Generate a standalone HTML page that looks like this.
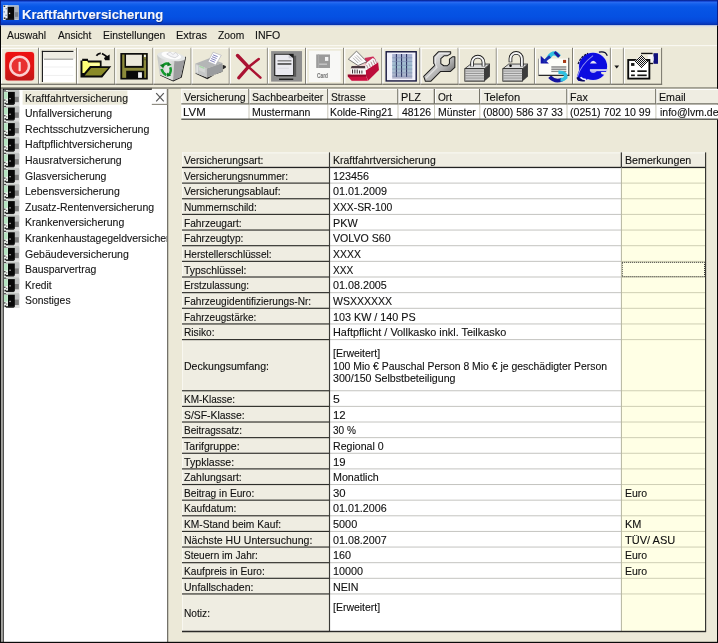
<!DOCTYPE html><html lang="de"><head><meta charset="utf-8"><title>Kraftfahrtversicherung</title><style>
*{box-sizing:border-box;margin:0;padding:0}
html,body{width:718px;height:643px;overflow:hidden;background:#ece9d8}
body{position:relative;font-family:"Liberation Sans",sans-serif;font-size:11.5px;color:#101010;line-height:1}
#tx{position:absolute;left:0;top:0;width:718px;height:643px;will-change:transform}
#g{position:absolute;left:0;top:0;width:718px;height:643px;display:block}
.a{position:absolute}
.t{position:absolute;white-space:nowrap;transform-origin:0 0;line-height:1;display:block;-webkit-text-stroke:0.12px currentColor}
#lp{position:absolute;left:3px;top:90px;width:163.9px;height:552px;overflow:hidden}
</style></head><body>
<svg id="g" width="718" height="643" viewBox="0 0 718 643">
<defs><linearGradient id="tg" gradientUnits="userSpaceOnUse" x1="0" y1="0" x2="0" y2="25.4"><stop offset="0.000" stop-color="#08207c"/><stop offset="0.039" stop-color="#0a34c4"/><stop offset="0.087" stop-color="#2a6cf0"/><stop offset="0.157" stop-color="#1460ec"/><stop offset="0.276" stop-color="#0756e6"/><stop offset="0.669" stop-color="#0550e2"/><stop offset="0.827" stop-color="#074ada"/><stop offset="0.913" stop-color="#083cc6"/><stop offset="1.000" stop-color="#062e9e"/></linearGradient></defs>
<rect x="0.00" y="0.00" width="718.00" height="25.40" fill="url(#tg)"/>
<rect x="0.00" y="25.30" width="718.00" height="1.40" fill="#cdd6ee"/>
<rect x="0.00" y="26.50" width="718.00" height="1.00" fill="#e6e6e0"/>
<rect x="0.00" y="0.00" width="1.00" height="25.40" fill="#0a1f8a"/>
<rect x="717.00" y="0.00" width="1.00" height="25.40" fill="#0a1f8a"/>
<rect x="0.00" y="45.10" width="718.00" height="1.00" fill="#fbfaf4"/>
<g transform="translate(3.2,5.2)"><rect x="0" y="0" width="15.6" height="14.8" fill="#c4ccd8"/><rect x="0" y="0" width="4.6" height="14.8" fill="#e4ecf8"/><rect x="0.4" y="0.4" width="1.6" height="1.4" fill="#333"/><rect x="2.4" y="2.8" width="1.4" height="1.4" fill="#8898b8"/><rect x="0.4" y="6" width="1.4" height="1.4" fill="#8898b8"/><rect x="2.2" y="9.4" width="1.4" height="1.4" fill="#8898b8"/><rect x="0.6" y="12.2" width="1.6" height="1.6" fill="#333"/><rect x="4.4" y="1.6" width="6.8" height="12.4" fill="#080808"/><rect x="2.4" y="13.2" width="8.6" height="1.5" fill="#101018"/><rect x="5.7" y="7.6" width="1.3" height="1.3" fill="#d8d8d8"/><rect x="11.2" y="1.0" width="4.4" height="13" fill="#a8aeb8"/><rect x="11.6" y="7" width="3.4" height="4.6" fill="#7c828c"/></g>
<rect x="0.75" y="47.80" width="1.20" height="37.10" fill="#ffffff"/>
<rect x="0.75" y="47.80" width="37.35" height="1.00" fill="#ffffff"/>
<rect x="38.00" y="47.80" width="1.00" height="37.20" fill="#77756a"/>
<rect x="0.75" y="83.65" width="38.25" height="1.30" fill="#77756a"/>
<g transform="translate(0,44) scale(0.08357)"><rect x="52" y="87" width="366" height="360" rx="45" fill="#f6c8c0" opacity="0.75"/><defs><linearGradient id="pw" x1="0" y1="0" x2="0" y2="1"><stop offset="0" stop-color="#ee1010"/><stop offset="0.5" stop-color="#e01414"/><stop offset="1" stop-color="#c01818"/></linearGradient></defs><rect x="62" y="97" width="346" height="340" rx="36" fill="url(#pw)"/><circle cx="235" cy="264" r="112" fill="#e83030" stroke="#fbd0d0" stroke-width="30"/><rect x="222" y="213" width="26" height="112" rx="8" fill="#fbd8d8"/></g>
<rect x="38.90" y="47.80" width="1.20" height="37.10" fill="#ffffff"/>
<rect x="38.90" y="47.80" width="37.35" height="1.00" fill="#ffffff"/>
<rect x="76.15" y="47.80" width="1.00" height="37.20" fill="#77756a"/>
<rect x="38.90" y="83.65" width="38.25" height="1.30" fill="#77756a"/>
<g transform="translate(36,44) scale(0.08357)"><rect x="70" y="82" width="402" height="376" fill="#ffffff" /><rect x="82" y="95" width="390" height="81" fill="#efede4" /><rect x="95" y="174" width="350" height="16" fill="#a8a8a4" /><rect x="95" y="270" width="350" height="10" fill="#ececec" /><rect x="95" y="370" width="350" height="10" fill="#ececec" /><rect x="70" y="82" width="378" height="13" fill="#151515" /><rect x="70" y="82" width="13" height="373" fill="#151515" /></g>
<rect x="77.05" y="47.80" width="1.20" height="37.10" fill="#ffffff"/>
<rect x="77.05" y="47.80" width="37.35" height="1.00" fill="#ffffff"/>
<rect x="114.30" y="47.80" width="1.00" height="37.20" fill="#77756a"/>
<rect x="77.05" y="83.65" width="38.25" height="1.30" fill="#77756a"/>
<g transform="translate(74,44) scale(0.08357)"><polygon points="78,198 98,198 98,176 166,176 170,198 330,198 330,266 446,266 338,402 78,402" fill="#0a0a0a" /><polygon points="101,203 158,203 170,222 308,222 308,262 192,262 122,348 101,348" fill="#ffff78" /><polygon points="180,232 306,232 306,258 200,258" fill="#ffffb0" /><polygon points="205,287 410,287 325,378 128,378" fill="#8a8a28" /><path d="M268 140 Q300 98 345 120 Q380 138 398 160" stroke="#0a0a0a" stroke-width="22" fill="none" stroke-dasharray="62 14 200"/><polygon points="358,168 426,126 426,194 372,194" fill="#0a0a0a" /></g>
<rect x="115.20" y="47.80" width="1.20" height="37.10" fill="#ffffff"/>
<rect x="115.20" y="47.80" width="37.35" height="1.00" fill="#ffffff"/>
<rect x="152.45" y="47.80" width="1.00" height="37.20" fill="#77756a"/>
<rect x="115.20" y="83.65" width="38.25" height="1.30" fill="#77756a"/>
<g transform="translate(112,44) scale(0.08357)"><rect x="100" y="108" width="328" height="317" fill="#0a0a0a" /><rect x="122" y="126" width="286" height="279" fill="#8c8a3a" /><rect x="150" y="118" width="228" height="167" fill="#0a0a0a" /><rect x="168" y="128" width="190" height="134" fill="#ece9dc" /><rect x="383" y="130" width="22" height="25" fill="#f4f4f4" /><rect x="385" y="175" width="20" height="20" fill="#5a5a30" /><rect x="170" y="320" width="215" height="92" fill="#0a0a0a" /><rect x="312" y="338" width="46" height="67" fill="#f2f2f2" /></g>
<rect x="153.35" y="47.80" width="1.20" height="37.10" fill="#ffffff"/>
<rect x="153.35" y="47.80" width="37.35" height="1.00" fill="#ffffff"/>
<rect x="190.60" y="47.80" width="1.00" height="37.20" fill="#77756a"/>
<rect x="153.35" y="83.65" width="38.25" height="1.30" fill="#77756a"/>
<g transform="translate(150,44) scale(0.08357)"><defs><linearGradient id="rb1" x1="0" y1="0" x2="1" y2="0"><stop offset="0" stop-color="#c4c6c4"/><stop offset="0.6" stop-color="#e6e8e6"/><stop offset="1" stop-color="#d0d2d0"/></linearGradient></defs><polygon points="120,378 278,448 380,402 432,160 420,150 368,392 278,432 122,366" fill="#1a1a1a" /><polygon points="85,128 292,195 276,438 116,368" fill="url(#rb1)" /><polygon points="292,195 424,156 368,398 276,438" fill="#9c9c9e" /><ellipse cx="255" cy="150" rx="168" ry="52" fill="#e4e6e6" transform="rotate(8 255 150)"/><ellipse cx="255" cy="138" rx="120" ry="42" fill="#fdfdfd" transform="rotate(10 255 138)"/><path d="M200 120 L240 95 L275 125 L310 100 L340 140 L300 165 L250 150 Z" fill="#f4f4f6" stroke="#c8c8cc" stroke-width="8"/><g fill="none" stroke="#139a2c" stroke-width="30"><path d="M150 268 Q175 222 228 238"/><path d="M242 278 Q262 330 226 366"/><path d="M196 372 Q150 350 138 300"/></g><polygon points="118,252 170,236 160,292" fill="#0c7a20"/><polygon points="214,214 258,252 206,266" fill="#0c7a20"/><polygon points="206,340 252,380 200,392" fill="#0c7a20"/></g>
<rect x="191.50" y="47.80" width="1.20" height="37.10" fill="#ffffff"/>
<rect x="191.50" y="47.80" width="37.35" height="1.00" fill="#ffffff"/>
<rect x="228.75" y="47.80" width="1.00" height="37.20" fill="#77756a"/>
<rect x="191.50" y="83.65" width="38.25" height="1.30" fill="#77756a"/>
<g transform="translate(188,44) scale(0.08357)"><polygon points="90,344 92,356 232,422 454,282 452,264 414,248 412,332 226,402" fill="#262626" /><polygon points="85,235 225,292 225,402 90,346" fill="#c6c8c8" /><polygon points="85,235 255,172 412,226 225,292" fill="#b4b6b6" /><polygon points="225,292 412,226 412,332 225,402" fill="#9a9c9e" /><polygon points="100,250 118,257 118,345 100,338" fill="#e4e6e4" /><polygon points="128,255 202,285 202,345 128,315" fill="#d4d6d4" /><polygon points="135,258 195,282 195,298 135,274" fill="#a8d8a8" /><polygon points="240,212 300,98 398,136 332,250" fill="#ffffff" stroke="#9a9aa8" stroke-width="6"/><g stroke="#6a6ab0" stroke-width="10"><path d="M300 130 L355 152"/><path d="M288 152 L343 174"/><path d="M277 174 L332 196"/><path d="M266 196 L321 218"/></g></g>
<rect x="229.65" y="47.80" width="1.20" height="37.10" fill="#ffffff"/>
<rect x="229.65" y="47.80" width="37.35" height="1.00" fill="#ffffff"/>
<rect x="266.90" y="47.80" width="1.00" height="37.20" fill="#77756a"/>
<rect x="229.65" y="83.65" width="38.25" height="1.30" fill="#77756a"/>
<g transform="translate(226,44) scale(0.08357)"><g fill="none" stroke="#aa1232" stroke-linecap="round"><path d="M138 138 L262 268" stroke-width="42"/><path d="M262 268 L412 402" stroke-width="30"/><path d="M392 180 L262 280" stroke-width="30"/><path d="M262 280 L152 405" stroke-width="38"/></g></g>
<rect x="267.80" y="47.80" width="1.20" height="37.10" fill="#ffffff"/>
<rect x="267.80" y="47.80" width="37.35" height="1.00" fill="#ffffff"/>
<rect x="305.05" y="47.80" width="1.00" height="37.20" fill="#77756a"/>
<rect x="267.80" y="83.65" width="38.25" height="1.30" fill="#77756a"/>
<g transform="translate(264,44) scale(0.08357)"><rect x="85" y="85" width="370" height="365" fill="#8e8e8e" /><rect x="145" y="140" width="240" height="252" fill="#5a5a5a" /><rect x="122" y="118" width="233" height="264" fill="#1a1a1a" /><polygon points="135,130 295,130 348,172 348,370 135,370" fill="#eaeaf0" /><polygon points="295,130 348,172 295,172" fill="#c8c8d0" /><rect x="162" y="192" width="166" height="18" fill="#8a8a8a" /><rect x="162" y="228" width="166" height="22" fill="#5a5a5a" /><rect x="162" y="285" width="138" height="8" fill="#d0d0d8" /><rect x="180" y="414" width="170" height="16" fill="#1a1a1a" /></g>
<rect x="305.95" y="47.80" width="1.20" height="37.10" fill="#ffffff"/>
<rect x="305.95" y="47.80" width="37.35" height="1.00" fill="#ffffff"/>
<rect x="343.20" y="47.80" width="1.00" height="37.20" fill="#77756a"/>
<rect x="305.95" y="83.65" width="38.25" height="1.30" fill="#77756a"/>
<g transform="translate(302,44) scale(0.08357)"><rect x="82" y="80" width="380" height="376" fill="#f8f8f6" /><rect x="170" y="125" width="165" height="162" fill="#9a9a9a" /><rect x="190" y="125" width="15" height="162" fill="#a8a8a8" /><rect x="275" y="155" width="40" height="47" fill="#f4f4f4" /><rect x="205" y="235" width="95" height="12" fill="#d8d8d8" /></g>
<rect x="344.10" y="47.80" width="1.20" height="37.10" fill="#ffffff"/>
<rect x="344.10" y="47.80" width="37.35" height="1.00" fill="#ffffff"/>
<rect x="381.35" y="47.80" width="1.00" height="37.20" fill="#77756a"/>
<rect x="344.10" y="83.65" width="38.25" height="1.30" fill="#77756a"/>
<g transform="translate(340,44) scale(0.08357)"><polygon points="88,372 120,350 135,295 300,160 400,148 452,205 468,312 335,445 140,445 88,392" fill="#f2c0c8" opacity="0.6"/><polygon points="296,168 398,150 456,222 320,300" fill="#cc3058" /><polygon points="304,318 456,218 466,310 335,440 312,372" fill="#bc0c3a" /><polygon points="95,372 310,372 332,440 140,440 95,392" fill="#cc1040" /><polygon points="92,366 312,366 320,390 95,392" fill="#8c0828" /><polygon points="298,290 316,225 392,168 446,198 452,222 308,318" fill="#f6f6f6" /><g stroke="#a87880" stroke-width="10"><path d="M318 252 L338 296"/><path d="M344 232 L364 278"/><path d="M370 212 L390 260"/><path d="M396 194 L416 242"/><path d="M420 182 L438 226"/></g><polygon points="140,262 300,262 302,292 128,292" fill="#4a3a40" /><polygon points="128,292 302,292 312,362 128,362" fill="#fafafa" /><g stroke="#3a2a30" stroke-width="12"><path d="M150 305 L150 352"/><path d="M178 305 L178 352"/><path d="M206 305 L206 352"/><path d="M234 318 L234 352"/><path d="M262 318 L262 352"/></g><polygon points="198,85 322,212 216,258 100,182" fill="#fbfbfb" stroke="#3a3a3a" stroke-width="8"/><g stroke="#9a9a9a" stroke-width="9"><path d="M200 135 L262 198"/><path d="M178 150 L240 212"/><path d="M156 165 L218 228"/></g></g>
<rect x="382.25" y="47.80" width="1.20" height="37.10" fill="#ffffff"/>
<rect x="382.25" y="47.80" width="37.35" height="1.00" fill="#ffffff"/>
<rect x="419.50" y="47.80" width="1.00" height="37.20" fill="#77756a"/>
<rect x="382.25" y="83.65" width="38.25" height="1.30" fill="#77756a"/>
<g transform="translate(378,44) scale(0.08357)"><rect x="90" y="85" width="375" height="365" fill="#f2f2fc" /><defs><linearGradient id="gr" x1="0" y1="0" x2="0" y2="1"><stop offset="0" stop-color="#a8aed0"/><stop offset="0.5" stop-color="#a0c0d0"/><stop offset="1" stop-color="#b0b0c8"/></linearGradient></defs><rect x="170" y="120" width="240" height="295" fill="url(#gr)" /><g stroke="#1a2050" stroke-width="11"><path d="M220 120 L220 395"/><path d="M282 120 L282 395"/><path d="M342 120 L342 395"/></g><g stroke="#7a88b0" stroke-width="7"><path d="M170 165 L410 165"/><path d="M170 210 L410 210"/><path d="M170 255 L410 255"/><path d="M170 300 L410 300"/><path d="M170 345 L410 345"/><path d="M170 385 L410 385"/></g><rect x="98" y="93" width="359" height="349" fill="none" stroke="#16163c" stroke-width="17"/></g>
<rect x="420.40" y="47.80" width="1.20" height="37.10" fill="#ffffff"/>
<rect x="420.40" y="47.80" width="37.35" height="1.00" fill="#ffffff"/>
<rect x="457.65" y="47.80" width="1.00" height="37.20" fill="#77756a"/>
<rect x="420.40" y="83.65" width="38.25" height="1.30" fill="#77756a"/>
<g transform="translate(416,44) scale(0.08357)"><defs><linearGradient id="wr" x1="0" y1="0" x2="1" y2="1"><stop offset="0" stop-color="#6a6a6a"/><stop offset="0.3" stop-color="#d8d8d8"/><stop offset="0.6" stop-color="#b0b0b0"/><stop offset="1" stop-color="#4a4a4a"/></linearGradient></defs><path d="M92 388 L228 252 L212 232 L212 150 L270 92 L415 92 L415 118 L372 142 L335 142 L297 176 L297 234 L332 260 L375 260 L400 234 L400 182 L440 152 L465 152 L465 280 L410 330 L292 330 L176 446 L112 446 Z" fill="url(#wr)" stroke="#1c1c1c" stroke-width="12" stroke-linejoin="round"/><path d="M120 410 L250 280 L232 240 L232 160 L280 112 L395 112" fill="none" stroke="#f0f0f0" stroke-width="14" opacity="0.7"/></g>
<rect x="458.55" y="47.80" width="1.20" height="37.10" fill="#ffffff"/>
<rect x="458.55" y="47.80" width="37.35" height="1.00" fill="#ffffff"/>
<rect x="495.80" y="47.80" width="1.00" height="37.20" fill="#77756a"/>
<rect x="458.55" y="83.65" width="38.25" height="1.30" fill="#77756a"/>
<g transform="translate(454,44) scale(0.08357)"><polygon points="130,295 200,240 430,240 365,295" fill="#dcdcdc" stroke="#1a1a1a" stroke-width="9"/><polygon points="365,295 430,240 430,390 365,445" fill="#3c3c3c" /><rect x="130" y="295" width="235" height="150" fill="#f0f0f0" stroke="#1a1a1a" stroke-width="10"/><g stroke="#7c7c7c" stroke-width="10"><path d="M135 312 L362 312"/><path d="M135 333 L362 333"/><path d="M135 354 L362 354"/><path d="M135 375 L362 375"/><path d="M135 396 L362 396"/><path d="M135 417 L362 417"/><path d="M135 438 L362 438"/></g><path d="M217 268 L217 220 A68 68 0 0 1 353 220 L353 268" fill="none" stroke="#1a1a1a" stroke-width="44"/><path d="M217 268 L217 220 A68 68 0 0 1 353 220 L353 268" fill="none" stroke="#f6f6f6" stroke-width="24"/></g>
<rect x="496.70" y="47.80" width="1.20" height="37.10" fill="#ffffff"/>
<rect x="496.70" y="47.80" width="37.35" height="1.00" fill="#ffffff"/>
<rect x="533.95" y="47.80" width="1.00" height="37.20" fill="#77756a"/>
<rect x="496.70" y="83.65" width="38.25" height="1.30" fill="#77756a"/>
<g transform="translate(492,44) scale(0.08357)"><polygon points="130,295 200,240 430,240 365,295" fill="#dcdcdc" stroke="#1a1a1a" stroke-width="9"/><polygon points="365,295 430,240 430,390 365,445" fill="#3c3c3c" /><rect x="130" y="295" width="235" height="150" fill="#f0f0f0" stroke="#1a1a1a" stroke-width="10"/><g stroke="#7c7c7c" stroke-width="10"><path d="M135 312 L362 312"/><path d="M135 333 L362 333"/><path d="M135 354 L362 354"/><path d="M135 375 L362 375"/><path d="M135 396 L362 396"/><path d="M135 417 L362 417"/><path d="M135 438 L362 438"/></g><path d="M221 218 L221 175 A68 68 0 0 1 357 175 L357 268" fill="none" stroke="#1a1a1a" stroke-width="44"/><path d="M221 212 L221 175 A68 68 0 0 1 357 175 L357 268" fill="none" stroke="#f6f6f6" stroke-width="24"/><circle cx="222" cy="260" r="15" fill="#0a0a0a"/></g>
<rect x="534.85" y="47.80" width="1.20" height="37.10" fill="#ffffff"/>
<rect x="534.85" y="47.80" width="37.35" height="1.00" fill="#ffffff"/>
<rect x="572.10" y="47.80" width="1.00" height="37.20" fill="#77756a"/>
<rect x="534.85" y="83.65" width="38.25" height="1.30" fill="#77756a"/>
<g transform="translate(530,44) scale(0.08357)"><path d="M205 195 Q275 55 350 150" fill="none" stroke="#30c0e0" stroke-width="50"/><path d="M295 95 L350 152" fill="none" stroke="#1a1a9a" stroke-width="34"/><path d="M235 392 Q300 462 385 425" fill="none" stroke="#1414a0" stroke-width="46"/><rect x="100" y="175" width="365" height="203" fill="#fdfdf8" /><rect x="100" y="368" width="370" height="14" fill="#1a1a1a" /><rect x="458" y="165" width="12" height="217" fill="#3a3a3a" /><rect x="96" y="175" width="10" height="203" fill="#8a8a8a" /><rect x="395" y="190" width="37" height="37" fill="#a83814" /><rect x="255" y="266" width="180" height="18" fill="#8a8a8a" /><rect x="255" y="293" width="180" height="18" fill="#8a8a8a" /><rect x="255" y="320" width="180" height="16" fill="#8a8a8a" /><polygon points="128,140 128,234 226,234" fill="#1414a8" /><path d="M160 215 L240 148" fill="none" stroke="#1a30b0" stroke-width="34"/><path d="M340 338 Q435 335 428 400 Q400 430 365 430" fill="none" stroke="#30c0e0" stroke-width="42"/></g>
<rect x="573.00" y="47.80" width="1.20" height="37.10" fill="#ffffff"/>
<rect x="573.00" y="47.80" width="37.00" height="1.00" fill="#ffffff"/>
<rect x="609.90" y="47.80" width="1.00" height="37.20" fill="#77756a"/>
<rect x="573.00" y="83.65" width="37.90" height="1.30" fill="#77756a"/>
<g transform="translate(568,44) scale(0.08357)"><ellipse cx="298" cy="268" rx="178" ry="170" fill="#d8d8f8" opacity="0.8"/><ellipse cx="300" cy="268" rx="168" ry="162" fill="#0c0ce0"/><path d="M108 405 Q120 300 200 200 L240 420 Q180 450 120 440 Z" fill="#0c0ce0"/><path d="M262 232 Q300 170 345 232 Z" fill="#e8e8f4"/><path d="M262 300 L470 300 L470 325 L262 325 Z" fill="#c8c8f0"/><path d="M262 325 Q300 365 345 325 Z" fill="#e0e0f4"/><path d="M395 335 L480 335 L470 380 L400 360 Z" fill="#ece9d8"/><path d="M120 240 Q150 150 240 110" fill="none" stroke="#0a0a30" stroke-width="14" stroke-dasharray="30 12"/><path d="M370 98 Q450 80 470 140" fill="none" stroke="#0a0a30" stroke-width="14"/><path d="M110 400 Q150 250 300 140" fill="none" stroke="#9090f0" stroke-width="12"/><path d="M112 400 Q130 445 200 435" fill="none" stroke="#0a0a60" stroke-width="26"/><path d="M150 398 Q175 425 215 425" fill="none" stroke="#f4f4ff" stroke-width="20"/></g>
<rect x="610.80" y="47.80" width="1.20" height="37.10" fill="#ffffff"/>
<rect x="610.80" y="47.80" width="12.20" height="1.00" fill="#ffffff"/>
<rect x="622.90" y="47.80" width="1.00" height="37.20" fill="#77756a"/>
<rect x="610.80" y="83.65" width="13.10" height="1.30" fill="#77756a"/>
<g transform="translate(568,44) scale(0.08357)"><polygon points="555,258 612,258 583,292" fill="#141414" /></g>
<rect x="623.80" y="47.80" width="1.20" height="37.10" fill="#ffffff"/>
<rect x="623.80" y="47.80" width="37.40" height="1.00" fill="#ffffff"/>
<rect x="661.10" y="47.80" width="1.00" height="37.20" fill="#77756a"/>
<rect x="623.80" y="83.65" width="38.30" height="1.30" fill="#77756a"/>
<g transform="translate(606,44) scale(0.08357)"><rect x="500" y="128" width="62" height="100" fill="#f8f8f8" /><rect x="420" y="105" width="138" height="16" fill="#141414" /><rect x="500" y="225" width="62" height="16" fill="#141414" /><rect x="568" y="110" width="54" height="127" fill="#10107c" /><rect x="558" y="150" width="14" height="50" fill="#d8d8f0" /><rect x="266" y="191" width="253" height="223" fill="#ffffff" stroke="#0a0a0a" stroke-width="22"/><polygon points="420,128 500,208 420,288 340,208" fill="#f4f4f4" /><rect x="300" y="228" width="40" height="34" fill="#141414" /><rect x="300" y="315" width="45" height="20" fill="#141414" /><rect x="375" y="315" width="112" height="20" fill="#141414" /><rect x="300" y="365" width="45" height="20" fill="#141414" /><rect x="375" y="365" width="112" height="20" fill="#141414" /></g><g fill="#101010"><rect x="641" y="55" width="1" height="1"/><rect x="640" y="56" width="1" height="1"/><rect x="642" y="56" width="1" height="1"/><rect x="639" y="57" width="1" height="1"/><rect x="641" y="57" width="1" height="1"/><rect x="643" y="57" width="1" height="1"/><rect x="638" y="58" width="1" height="1"/><rect x="640" y="58" width="1" height="1"/><rect x="642" y="58" width="1" height="1"/><rect x="644" y="58" width="1" height="1"/><rect x="637" y="59" width="1" height="1"/><rect x="639" y="59" width="1" height="1"/><rect x="641" y="59" width="1" height="1"/><rect x="643" y="59" width="1" height="1"/><rect x="645" y="59" width="1" height="1"/><rect x="636" y="60" width="1" height="1"/><rect x="638" y="60" width="1" height="1"/><rect x="640" y="60" width="1" height="1"/><rect x="642" y="60" width="1" height="1"/><rect x="644" y="60" width="1" height="1"/><rect x="646" y="60" width="1" height="1"/><rect x="635" y="61" width="1" height="1"/><rect x="637" y="61" width="1" height="1"/><rect x="639" y="61" width="1" height="1"/><rect x="641" y="61" width="1" height="1"/><rect x="643" y="61" width="1" height="1"/><rect x="645" y="61" width="1" height="1"/><rect x="647" y="61" width="1" height="1"/><rect x="636" y="62" width="1" height="1"/><rect x="638" y="62" width="1" height="1"/><rect x="640" y="62" width="1" height="1"/><rect x="642" y="62" width="1" height="1"/><rect x="644" y="62" width="1" height="1"/><rect x="646" y="62" width="1" height="1"/><rect x="637" y="63" width="1" height="1"/><rect x="639" y="63" width="1" height="1"/><rect x="641" y="63" width="1" height="1"/><rect x="643" y="63" width="1" height="1"/><rect x="645" y="63" width="1" height="1"/><rect x="638" y="64" width="1" height="1"/><rect x="640" y="64" width="1" height="1"/><rect x="642" y="64" width="1" height="1"/><rect x="644" y="64" width="1" height="1"/><rect x="639" y="65" width="1" height="1"/><rect x="641" y="65" width="1" height="1"/><rect x="643" y="65" width="1" height="1"/><rect x="640" y="66" width="1" height="1"/><rect x="642" y="66" width="1" height="1"/><rect x="641" y="67" width="1" height="1"/></g>
<rect x="0.00" y="87.20" width="718.00" height="1.60" fill="#908e80"/>
<rect x="3.30" y="89.20" width="163.80" height="553.00" fill="#fff"/>
<rect x="0.90" y="87.80" width="151.10" height="1.00" fill="#77756a"/>
<rect x="2.90" y="88.75" width="149.10" height="1.00" fill="#0a0a0a"/>
<rect x="167.20" y="89.00" width="1.00" height="554.00" fill="#55544e"/>
<rect x="168.10" y="89.00" width="0.80" height="554.00" fill="#c8c6b8"/>
<rect x="22.60" y="90.50" width="104.80" height="14.20" fill="#eceadb"/>
<g transform="translate(3.7,90.00)"><rect x="0" y="0" width="15.6" height="15.2" fill="#c4c6c4"/><rect x="0" y="0" width="4.6" height="15.2" fill="#eef4ee"/><rect x="0.4" y="2.2" width="3.6" height="6.6" fill="#b4e4c0"/><rect x="0.5" y="0.3" width="1.6" height="1.3" fill="#222"/><rect x="2.6" y="1.0" width="1.2" height="1.0" fill="#666"/><rect x="0.4" y="9.4" width="1.4" height="1.4" fill="#444"/><rect x="2.4" y="10.6" width="1.2" height="1.2" fill="#777"/><rect x="0.8" y="12.6" width="1.6" height="1.6" fill="#222"/><rect x="4.5" y="0" width="6.6" height="1.9" fill="#c4c8c4"/><rect x="4.3" y="1.9" width="6.9" height="12.2" fill="#080808"/><rect x="2.2" y="13.4" width="8" height="1.5" fill="#1a1a1a"/><rect x="5.7" y="8.0" width="1.3" height="1.3" fill="#c8c8c8"/><rect x="11.2" y="1.5" width="4.4" height="5.6" fill="#bcbebe"/><rect x="11.3" y="6.8" width="3.8" height="5.4" fill="#7c7c7c"/><rect x="11.2" y="12.4" width="4.4" height="2.8" fill="#e0e0e0"/></g>
<g transform="translate(3.7,105.60)"><rect x="0" y="0" width="15.6" height="15.2" fill="#c4c6c4"/><rect x="0" y="0" width="4.6" height="15.2" fill="#eef4ee"/><rect x="0.4" y="2.2" width="3.6" height="6.6" fill="#b4e4c0"/><rect x="0.5" y="0.3" width="1.6" height="1.3" fill="#222"/><rect x="2.6" y="1.0" width="1.2" height="1.0" fill="#666"/><rect x="0.4" y="9.4" width="1.4" height="1.4" fill="#444"/><rect x="2.4" y="10.6" width="1.2" height="1.2" fill="#777"/><rect x="0.8" y="12.6" width="1.6" height="1.6" fill="#222"/><rect x="4.5" y="0" width="6.6" height="1.9" fill="#c4c8c4"/><rect x="4.3" y="1.9" width="6.9" height="12.2" fill="#080808"/><rect x="2.2" y="13.4" width="8" height="1.5" fill="#1a1a1a"/><rect x="5.7" y="8.0" width="1.3" height="1.3" fill="#c8c8c8"/><rect x="11.2" y="1.5" width="4.4" height="5.6" fill="#bcbebe"/><rect x="11.3" y="6.8" width="3.8" height="5.4" fill="#7c7c7c"/><rect x="11.2" y="12.4" width="4.4" height="2.8" fill="#e0e0e0"/></g>
<g transform="translate(3.7,121.20)"><rect x="0" y="0" width="15.6" height="15.2" fill="#c4c6c4"/><rect x="0" y="0" width="4.6" height="15.2" fill="#eef4ee"/><rect x="0.4" y="2.2" width="3.6" height="6.6" fill="#b4e4c0"/><rect x="0.5" y="0.3" width="1.6" height="1.3" fill="#222"/><rect x="2.6" y="1.0" width="1.2" height="1.0" fill="#666"/><rect x="0.4" y="9.4" width="1.4" height="1.4" fill="#444"/><rect x="2.4" y="10.6" width="1.2" height="1.2" fill="#777"/><rect x="0.8" y="12.6" width="1.6" height="1.6" fill="#222"/><rect x="4.5" y="0" width="6.6" height="1.9" fill="#c4c8c4"/><rect x="4.3" y="1.9" width="6.9" height="12.2" fill="#080808"/><rect x="2.2" y="13.4" width="8" height="1.5" fill="#1a1a1a"/><rect x="5.7" y="8.0" width="1.3" height="1.3" fill="#c8c8c8"/><rect x="11.2" y="1.5" width="4.4" height="5.6" fill="#bcbebe"/><rect x="11.3" y="6.8" width="3.8" height="5.4" fill="#7c7c7c"/><rect x="11.2" y="12.4" width="4.4" height="2.8" fill="#e0e0e0"/></g>
<g transform="translate(3.7,136.80)"><rect x="0" y="0" width="15.6" height="15.2" fill="#c4c6c4"/><rect x="0" y="0" width="4.6" height="15.2" fill="#eef4ee"/><rect x="0.4" y="2.2" width="3.6" height="6.6" fill="#b4e4c0"/><rect x="0.5" y="0.3" width="1.6" height="1.3" fill="#222"/><rect x="2.6" y="1.0" width="1.2" height="1.0" fill="#666"/><rect x="0.4" y="9.4" width="1.4" height="1.4" fill="#444"/><rect x="2.4" y="10.6" width="1.2" height="1.2" fill="#777"/><rect x="0.8" y="12.6" width="1.6" height="1.6" fill="#222"/><rect x="4.5" y="0" width="6.6" height="1.9" fill="#c4c8c4"/><rect x="4.3" y="1.9" width="6.9" height="12.2" fill="#080808"/><rect x="2.2" y="13.4" width="8" height="1.5" fill="#1a1a1a"/><rect x="5.7" y="8.0" width="1.3" height="1.3" fill="#c8c8c8"/><rect x="11.2" y="1.5" width="4.4" height="5.6" fill="#bcbebe"/><rect x="11.3" y="6.8" width="3.8" height="5.4" fill="#7c7c7c"/><rect x="11.2" y="12.4" width="4.4" height="2.8" fill="#e0e0e0"/></g>
<g transform="translate(3.7,152.40)"><rect x="0" y="0" width="15.6" height="15.2" fill="#c4c6c4"/><rect x="0" y="0" width="4.6" height="15.2" fill="#eef4ee"/><rect x="0.4" y="2.2" width="3.6" height="6.6" fill="#b4e4c0"/><rect x="0.5" y="0.3" width="1.6" height="1.3" fill="#222"/><rect x="2.6" y="1.0" width="1.2" height="1.0" fill="#666"/><rect x="0.4" y="9.4" width="1.4" height="1.4" fill="#444"/><rect x="2.4" y="10.6" width="1.2" height="1.2" fill="#777"/><rect x="0.8" y="12.6" width="1.6" height="1.6" fill="#222"/><rect x="4.5" y="0" width="6.6" height="1.9" fill="#c4c8c4"/><rect x="4.3" y="1.9" width="6.9" height="12.2" fill="#080808"/><rect x="2.2" y="13.4" width="8" height="1.5" fill="#1a1a1a"/><rect x="5.7" y="8.0" width="1.3" height="1.3" fill="#c8c8c8"/><rect x="11.2" y="1.5" width="4.4" height="5.6" fill="#bcbebe"/><rect x="11.3" y="6.8" width="3.8" height="5.4" fill="#7c7c7c"/><rect x="11.2" y="12.4" width="4.4" height="2.8" fill="#e0e0e0"/></g>
<g transform="translate(3.7,168.00)"><rect x="0" y="0" width="15.6" height="15.2" fill="#c4c6c4"/><rect x="0" y="0" width="4.6" height="15.2" fill="#eef4ee"/><rect x="0.4" y="2.2" width="3.6" height="6.6" fill="#b4e4c0"/><rect x="0.5" y="0.3" width="1.6" height="1.3" fill="#222"/><rect x="2.6" y="1.0" width="1.2" height="1.0" fill="#666"/><rect x="0.4" y="9.4" width="1.4" height="1.4" fill="#444"/><rect x="2.4" y="10.6" width="1.2" height="1.2" fill="#777"/><rect x="0.8" y="12.6" width="1.6" height="1.6" fill="#222"/><rect x="4.5" y="0" width="6.6" height="1.9" fill="#c4c8c4"/><rect x="4.3" y="1.9" width="6.9" height="12.2" fill="#080808"/><rect x="2.2" y="13.4" width="8" height="1.5" fill="#1a1a1a"/><rect x="5.7" y="8.0" width="1.3" height="1.3" fill="#c8c8c8"/><rect x="11.2" y="1.5" width="4.4" height="5.6" fill="#bcbebe"/><rect x="11.3" y="6.8" width="3.8" height="5.4" fill="#7c7c7c"/><rect x="11.2" y="12.4" width="4.4" height="2.8" fill="#e0e0e0"/></g>
<g transform="translate(3.7,183.60)"><rect x="0" y="0" width="15.6" height="15.2" fill="#c4c6c4"/><rect x="0" y="0" width="4.6" height="15.2" fill="#eef4ee"/><rect x="0.4" y="2.2" width="3.6" height="6.6" fill="#b4e4c0"/><rect x="0.5" y="0.3" width="1.6" height="1.3" fill="#222"/><rect x="2.6" y="1.0" width="1.2" height="1.0" fill="#666"/><rect x="0.4" y="9.4" width="1.4" height="1.4" fill="#444"/><rect x="2.4" y="10.6" width="1.2" height="1.2" fill="#777"/><rect x="0.8" y="12.6" width="1.6" height="1.6" fill="#222"/><rect x="4.5" y="0" width="6.6" height="1.9" fill="#c4c8c4"/><rect x="4.3" y="1.9" width="6.9" height="12.2" fill="#080808"/><rect x="2.2" y="13.4" width="8" height="1.5" fill="#1a1a1a"/><rect x="5.7" y="8.0" width="1.3" height="1.3" fill="#c8c8c8"/><rect x="11.2" y="1.5" width="4.4" height="5.6" fill="#bcbebe"/><rect x="11.3" y="6.8" width="3.8" height="5.4" fill="#7c7c7c"/><rect x="11.2" y="12.4" width="4.4" height="2.8" fill="#e0e0e0"/></g>
<g transform="translate(3.7,199.20)"><rect x="0" y="0" width="15.6" height="15.2" fill="#c4c6c4"/><rect x="0" y="0" width="4.6" height="15.2" fill="#eef4ee"/><rect x="0.4" y="2.2" width="3.6" height="6.6" fill="#b4e4c0"/><rect x="0.5" y="0.3" width="1.6" height="1.3" fill="#222"/><rect x="2.6" y="1.0" width="1.2" height="1.0" fill="#666"/><rect x="0.4" y="9.4" width="1.4" height="1.4" fill="#444"/><rect x="2.4" y="10.6" width="1.2" height="1.2" fill="#777"/><rect x="0.8" y="12.6" width="1.6" height="1.6" fill="#222"/><rect x="4.5" y="0" width="6.6" height="1.9" fill="#c4c8c4"/><rect x="4.3" y="1.9" width="6.9" height="12.2" fill="#080808"/><rect x="2.2" y="13.4" width="8" height="1.5" fill="#1a1a1a"/><rect x="5.7" y="8.0" width="1.3" height="1.3" fill="#c8c8c8"/><rect x="11.2" y="1.5" width="4.4" height="5.6" fill="#bcbebe"/><rect x="11.3" y="6.8" width="3.8" height="5.4" fill="#7c7c7c"/><rect x="11.2" y="12.4" width="4.4" height="2.8" fill="#e0e0e0"/></g>
<g transform="translate(3.7,214.80)"><rect x="0" y="0" width="15.6" height="15.2" fill="#c4c6c4"/><rect x="0" y="0" width="4.6" height="15.2" fill="#eef4ee"/><rect x="0.4" y="2.2" width="3.6" height="6.6" fill="#b4e4c0"/><rect x="0.5" y="0.3" width="1.6" height="1.3" fill="#222"/><rect x="2.6" y="1.0" width="1.2" height="1.0" fill="#666"/><rect x="0.4" y="9.4" width="1.4" height="1.4" fill="#444"/><rect x="2.4" y="10.6" width="1.2" height="1.2" fill="#777"/><rect x="0.8" y="12.6" width="1.6" height="1.6" fill="#222"/><rect x="4.5" y="0" width="6.6" height="1.9" fill="#c4c8c4"/><rect x="4.3" y="1.9" width="6.9" height="12.2" fill="#080808"/><rect x="2.2" y="13.4" width="8" height="1.5" fill="#1a1a1a"/><rect x="5.7" y="8.0" width="1.3" height="1.3" fill="#c8c8c8"/><rect x="11.2" y="1.5" width="4.4" height="5.6" fill="#bcbebe"/><rect x="11.3" y="6.8" width="3.8" height="5.4" fill="#7c7c7c"/><rect x="11.2" y="12.4" width="4.4" height="2.8" fill="#e0e0e0"/></g>
<g transform="translate(3.7,230.40)"><rect x="0" y="0" width="15.6" height="15.2" fill="#c4c6c4"/><rect x="0" y="0" width="4.6" height="15.2" fill="#eef4ee"/><rect x="0.4" y="2.2" width="3.6" height="6.6" fill="#b4e4c0"/><rect x="0.5" y="0.3" width="1.6" height="1.3" fill="#222"/><rect x="2.6" y="1.0" width="1.2" height="1.0" fill="#666"/><rect x="0.4" y="9.4" width="1.4" height="1.4" fill="#444"/><rect x="2.4" y="10.6" width="1.2" height="1.2" fill="#777"/><rect x="0.8" y="12.6" width="1.6" height="1.6" fill="#222"/><rect x="4.5" y="0" width="6.6" height="1.9" fill="#c4c8c4"/><rect x="4.3" y="1.9" width="6.9" height="12.2" fill="#080808"/><rect x="2.2" y="13.4" width="8" height="1.5" fill="#1a1a1a"/><rect x="5.7" y="8.0" width="1.3" height="1.3" fill="#c8c8c8"/><rect x="11.2" y="1.5" width="4.4" height="5.6" fill="#bcbebe"/><rect x="11.3" y="6.8" width="3.8" height="5.4" fill="#7c7c7c"/><rect x="11.2" y="12.4" width="4.4" height="2.8" fill="#e0e0e0"/></g>
<g transform="translate(3.7,246.00)"><rect x="0" y="0" width="15.6" height="15.2" fill="#c4c6c4"/><rect x="0" y="0" width="4.6" height="15.2" fill="#eef4ee"/><rect x="0.4" y="2.2" width="3.6" height="6.6" fill="#b4e4c0"/><rect x="0.5" y="0.3" width="1.6" height="1.3" fill="#222"/><rect x="2.6" y="1.0" width="1.2" height="1.0" fill="#666"/><rect x="0.4" y="9.4" width="1.4" height="1.4" fill="#444"/><rect x="2.4" y="10.6" width="1.2" height="1.2" fill="#777"/><rect x="0.8" y="12.6" width="1.6" height="1.6" fill="#222"/><rect x="4.5" y="0" width="6.6" height="1.9" fill="#c4c8c4"/><rect x="4.3" y="1.9" width="6.9" height="12.2" fill="#080808"/><rect x="2.2" y="13.4" width="8" height="1.5" fill="#1a1a1a"/><rect x="5.7" y="8.0" width="1.3" height="1.3" fill="#c8c8c8"/><rect x="11.2" y="1.5" width="4.4" height="5.6" fill="#bcbebe"/><rect x="11.3" y="6.8" width="3.8" height="5.4" fill="#7c7c7c"/><rect x="11.2" y="12.4" width="4.4" height="2.8" fill="#e0e0e0"/></g>
<g transform="translate(3.7,261.60)"><rect x="0" y="0" width="15.6" height="15.2" fill="#c4c6c4"/><rect x="0" y="0" width="4.6" height="15.2" fill="#eef4ee"/><rect x="0.4" y="2.2" width="3.6" height="6.6" fill="#b4e4c0"/><rect x="0.5" y="0.3" width="1.6" height="1.3" fill="#222"/><rect x="2.6" y="1.0" width="1.2" height="1.0" fill="#666"/><rect x="0.4" y="9.4" width="1.4" height="1.4" fill="#444"/><rect x="2.4" y="10.6" width="1.2" height="1.2" fill="#777"/><rect x="0.8" y="12.6" width="1.6" height="1.6" fill="#222"/><rect x="4.5" y="0" width="6.6" height="1.9" fill="#c4c8c4"/><rect x="4.3" y="1.9" width="6.9" height="12.2" fill="#080808"/><rect x="2.2" y="13.4" width="8" height="1.5" fill="#1a1a1a"/><rect x="5.7" y="8.0" width="1.3" height="1.3" fill="#c8c8c8"/><rect x="11.2" y="1.5" width="4.4" height="5.6" fill="#bcbebe"/><rect x="11.3" y="6.8" width="3.8" height="5.4" fill="#7c7c7c"/><rect x="11.2" y="12.4" width="4.4" height="2.8" fill="#e0e0e0"/></g>
<g transform="translate(3.7,277.20)"><rect x="0" y="0" width="15.6" height="15.2" fill="#c4c6c4"/><rect x="0" y="0" width="4.6" height="15.2" fill="#eef4ee"/><rect x="0.4" y="2.2" width="3.6" height="6.6" fill="#b4e4c0"/><rect x="0.5" y="0.3" width="1.6" height="1.3" fill="#222"/><rect x="2.6" y="1.0" width="1.2" height="1.0" fill="#666"/><rect x="0.4" y="9.4" width="1.4" height="1.4" fill="#444"/><rect x="2.4" y="10.6" width="1.2" height="1.2" fill="#777"/><rect x="0.8" y="12.6" width="1.6" height="1.6" fill="#222"/><rect x="4.5" y="0" width="6.6" height="1.9" fill="#c4c8c4"/><rect x="4.3" y="1.9" width="6.9" height="12.2" fill="#080808"/><rect x="2.2" y="13.4" width="8" height="1.5" fill="#1a1a1a"/><rect x="5.7" y="8.0" width="1.3" height="1.3" fill="#c8c8c8"/><rect x="11.2" y="1.5" width="4.4" height="5.6" fill="#bcbebe"/><rect x="11.3" y="6.8" width="3.8" height="5.4" fill="#7c7c7c"/><rect x="11.2" y="12.4" width="4.4" height="2.8" fill="#e0e0e0"/></g>
<g transform="translate(3.7,292.80)"><rect x="0" y="0" width="15.6" height="15.2" fill="#c4c6c4"/><rect x="0" y="0" width="4.6" height="15.2" fill="#eef4ee"/><rect x="0.4" y="2.2" width="3.6" height="6.6" fill="#b4e4c0"/><rect x="0.5" y="0.3" width="1.6" height="1.3" fill="#222"/><rect x="2.6" y="1.0" width="1.2" height="1.0" fill="#666"/><rect x="0.4" y="9.4" width="1.4" height="1.4" fill="#444"/><rect x="2.4" y="10.6" width="1.2" height="1.2" fill="#777"/><rect x="0.8" y="12.6" width="1.6" height="1.6" fill="#222"/><rect x="4.5" y="0" width="6.6" height="1.9" fill="#c4c8c4"/><rect x="4.3" y="1.9" width="6.9" height="12.2" fill="#080808"/><rect x="2.2" y="13.4" width="8" height="1.5" fill="#1a1a1a"/><rect x="5.7" y="8.0" width="1.3" height="1.3" fill="#c8c8c8"/><rect x="11.2" y="1.5" width="4.4" height="5.6" fill="#bcbebe"/><rect x="11.3" y="6.8" width="3.8" height="5.4" fill="#7c7c7c"/><rect x="11.2" y="12.4" width="4.4" height="2.8" fill="#e0e0e0"/></g>
<rect x="151.80" y="89.20" width="15.20" height="15.20" fill="#fdfdfd"/>
<rect x="166.75" y="89.20" width="0.90" height="15.70" fill="#8a887c"/>
<rect x="151.80" y="103.85" width="15.80" height="1.10" fill="#8a887c"/>
<path d="M156.2 93.2 L163.8 101.4 M163.8 93.2 L156.2 101.4" stroke="#555" stroke-width="1.2" fill="none"/>
<rect x="0.00" y="25.40" width="1.00" height="618.00" fill="#050505"/>
<rect x="717.00" y="25.50" width="1.00" height="618.00" fill="#050505"/>
<rect x="0.90" y="88.90" width="2.00" height="555.00" fill="#a4a4a0"/>
<rect x="2.90" y="88.90" width="0.80" height="555.00" fill="#0a0a0a"/>
<rect x="0.00" y="641.80" width="718.00" height="1.20" fill="#0a0a0a"/>
<rect x="181.30" y="88.90" width="537.00" height="15.60" fill="#efede2"/>
<rect x="181.30" y="104.50" width="537.00" height="14.70" fill="#fff"/>
<rect x="181.30" y="88.90" width="68.20" height="1.00" fill="#ffffff"/>
<rect x="181.30" y="88.90" width="1.00" height="15.60" fill="#ffffff"/>
<rect x="248.20" y="88.90" width="1.30" height="15.60" fill="#77756a"/>
<rect x="181.30" y="103.20" width="68.20" height="1.30" fill="#77756a"/>
<rect x="248.50" y="104.50" width="1.00" height="14.70" fill="#c9c7ba"/>
<rect x="249.50" y="88.90" width="78.80" height="1.00" fill="#ffffff"/>
<rect x="249.50" y="88.90" width="1.00" height="15.60" fill="#ffffff"/>
<rect x="327.00" y="88.90" width="1.30" height="15.60" fill="#77756a"/>
<rect x="249.50" y="103.20" width="78.80" height="1.30" fill="#77756a"/>
<rect x="327.30" y="104.50" width="1.00" height="14.70" fill="#c9c7ba"/>
<rect x="328.30" y="88.90" width="70.20" height="1.00" fill="#ffffff"/>
<rect x="328.30" y="88.90" width="1.00" height="15.60" fill="#ffffff"/>
<rect x="397.20" y="88.90" width="1.30" height="15.60" fill="#77756a"/>
<rect x="328.30" y="103.20" width="70.20" height="1.30" fill="#77756a"/>
<rect x="397.50" y="104.50" width="1.00" height="14.70" fill="#c9c7ba"/>
<rect x="398.50" y="88.90" width="36.50" height="1.00" fill="#ffffff"/>
<rect x="398.50" y="88.90" width="1.00" height="15.60" fill="#ffffff"/>
<rect x="433.70" y="88.90" width="1.30" height="15.60" fill="#77756a"/>
<rect x="398.50" y="103.20" width="36.50" height="1.30" fill="#77756a"/>
<rect x="434.00" y="104.50" width="1.00" height="14.70" fill="#c9c7ba"/>
<rect x="435.00" y="88.90" width="45.30" height="1.00" fill="#ffffff"/>
<rect x="435.00" y="88.90" width="1.00" height="15.60" fill="#ffffff"/>
<rect x="479.00" y="88.90" width="1.30" height="15.60" fill="#77756a"/>
<rect x="435.00" y="103.20" width="45.30" height="1.30" fill="#77756a"/>
<rect x="479.30" y="104.50" width="1.00" height="14.70" fill="#c9c7ba"/>
<rect x="480.30" y="88.90" width="87.20" height="1.00" fill="#ffffff"/>
<rect x="480.30" y="88.90" width="1.00" height="15.60" fill="#ffffff"/>
<rect x="566.20" y="88.90" width="1.30" height="15.60" fill="#77756a"/>
<rect x="480.30" y="103.20" width="87.20" height="1.30" fill="#77756a"/>
<rect x="566.50" y="104.50" width="1.00" height="14.70" fill="#c9c7ba"/>
<rect x="567.50" y="88.90" width="88.90" height="1.00" fill="#ffffff"/>
<rect x="567.50" y="88.90" width="1.00" height="15.60" fill="#ffffff"/>
<rect x="655.10" y="88.90" width="1.30" height="15.60" fill="#77756a"/>
<rect x="567.50" y="103.20" width="88.90" height="1.30" fill="#77756a"/>
<rect x="655.40" y="104.50" width="1.00" height="14.70" fill="#c9c7ba"/>
<rect x="656.40" y="88.90" width="63.60" height="1.00" fill="#ffffff"/>
<rect x="656.40" y="88.90" width="1.00" height="15.60" fill="#ffffff"/>
<rect x="718.70" y="88.90" width="1.30" height="15.60" fill="#77756a"/>
<rect x="656.40" y="103.20" width="63.60" height="1.30" fill="#77756a"/>
<rect x="719.00" y="104.50" width="1.00" height="14.70" fill="#c9c7ba"/>
<rect x="181.30" y="118.55" width="536.70" height="1.30" fill="#4a4a44"/>
<rect x="182.00" y="152.40" width="523.60" height="15.05" fill="#efede2"/>
<rect x="182.00" y="167.45" width="147.50" height="464.05" fill="#efede2"/>
<rect x="329.50" y="167.45" width="291.90" height="464.05" fill="#fff"/>
<rect x="621.40" y="167.45" width="84.20" height="464.05" fill="#ffffe5"/>
<rect x="182.00" y="152.40" width="523.60" height="1.00" fill="#fbfaf4"/>
<rect x="182.00" y="152.40" width="1.00" height="479.10" fill="#f8f7f0"/>
<rect x="330.20" y="152.40" width="1.00" height="15.05" fill="#fbfaf4"/>
<rect x="621.90" y="152.40" width="1.00" height="15.05" fill="#fbfaf4"/>
<rect x="182.00" y="166.80" width="523.60" height="1.30" fill="#222"/>
<rect x="182.00" y="182.53" width="147.50" height="1.15" fill="#2e2e2a"/>
<rect x="329.50" y="182.60" width="291.90" height="1.00" fill="#c4c4c0"/>
<rect x="621.40" y="182.60" width="84.20" height="1.00" fill="#cfcfb4"/>
<rect x="182.00" y="198.18" width="147.50" height="1.15" fill="#2e2e2a"/>
<rect x="329.50" y="198.25" width="291.90" height="1.00" fill="#c4c4c0"/>
<rect x="621.40" y="198.25" width="84.20" height="1.00" fill="#cfcfb4"/>
<rect x="182.00" y="213.82" width="147.50" height="1.15" fill="#2e2e2a"/>
<rect x="329.50" y="213.90" width="291.90" height="1.00" fill="#c4c4c0"/>
<rect x="621.40" y="213.90" width="84.20" height="1.00" fill="#cfcfb4"/>
<rect x="182.00" y="229.47" width="147.50" height="1.15" fill="#2e2e2a"/>
<rect x="329.50" y="229.55" width="291.90" height="1.00" fill="#c4c4c0"/>
<rect x="621.40" y="229.55" width="84.20" height="1.00" fill="#cfcfb4"/>
<rect x="182.00" y="245.12" width="147.50" height="1.15" fill="#2e2e2a"/>
<rect x="329.50" y="245.20" width="291.90" height="1.00" fill="#c4c4c0"/>
<rect x="621.40" y="245.20" width="84.20" height="1.00" fill="#cfcfb4"/>
<rect x="182.00" y="260.78" width="147.50" height="1.15" fill="#2e2e2a"/>
<rect x="329.50" y="260.85" width="291.90" height="1.00" fill="#c4c4c0"/>
<rect x="621.40" y="260.85" width="84.20" height="1.00" fill="#cfcfb4"/>
<rect x="182.00" y="276.43" width="147.50" height="1.15" fill="#2e2e2a"/>
<rect x="329.50" y="276.50" width="291.90" height="1.00" fill="#c4c4c0"/>
<rect x="621.40" y="276.50" width="84.20" height="1.00" fill="#cfcfb4"/>
<rect x="622.20" y="262.35" width="82.40" height="14.35" fill="none" stroke="#222" stroke-width="1" stroke-dasharray="1 1"/>
<rect x="182.00" y="292.07" width="147.50" height="1.15" fill="#2e2e2a"/>
<rect x="329.50" y="292.15" width="291.90" height="1.00" fill="#c4c4c0"/>
<rect x="621.40" y="292.15" width="84.20" height="1.00" fill="#cfcfb4"/>
<rect x="182.00" y="307.72" width="147.50" height="1.15" fill="#2e2e2a"/>
<rect x="329.50" y="307.80" width="291.90" height="1.00" fill="#c4c4c0"/>
<rect x="621.40" y="307.80" width="84.20" height="1.00" fill="#cfcfb4"/>
<rect x="182.00" y="323.38" width="147.50" height="1.15" fill="#2e2e2a"/>
<rect x="329.50" y="323.45" width="291.90" height="1.00" fill="#c4c4c0"/>
<rect x="621.40" y="323.45" width="84.20" height="1.00" fill="#cfcfb4"/>
<rect x="182.00" y="339.03" width="147.50" height="1.15" fill="#2e2e2a"/>
<rect x="329.50" y="339.10" width="291.90" height="1.00" fill="#c4c4c0"/>
<rect x="621.40" y="339.10" width="84.20" height="1.00" fill="#cfcfb4"/>
<rect x="182.00" y="390.18" width="147.50" height="1.15" fill="#2e2e2a"/>
<rect x="329.50" y="390.25" width="291.90" height="1.00" fill="#c4c4c0"/>
<rect x="621.40" y="390.25" width="84.20" height="1.00" fill="#cfcfb4"/>
<rect x="182.00" y="405.81" width="147.50" height="1.15" fill="#2e2e2a"/>
<rect x="329.50" y="405.88" width="291.90" height="1.00" fill="#c4c4c0"/>
<rect x="621.40" y="405.88" width="84.20" height="1.00" fill="#cfcfb4"/>
<rect x="182.00" y="421.44" width="147.50" height="1.15" fill="#2e2e2a"/>
<rect x="329.50" y="421.51" width="291.90" height="1.00" fill="#c4c4c0"/>
<rect x="621.40" y="421.51" width="84.20" height="1.00" fill="#cfcfb4"/>
<rect x="182.00" y="437.06" width="147.50" height="1.15" fill="#2e2e2a"/>
<rect x="329.50" y="437.14" width="291.90" height="1.00" fill="#c4c4c0"/>
<rect x="621.40" y="437.14" width="84.20" height="1.00" fill="#cfcfb4"/>
<rect x="182.00" y="452.69" width="147.50" height="1.15" fill="#2e2e2a"/>
<rect x="329.50" y="452.77" width="291.90" height="1.00" fill="#c4c4c0"/>
<rect x="621.40" y="452.77" width="84.20" height="1.00" fill="#cfcfb4"/>
<rect x="182.00" y="468.32" width="147.50" height="1.15" fill="#2e2e2a"/>
<rect x="329.50" y="468.40" width="291.90" height="1.00" fill="#c4c4c0"/>
<rect x="621.40" y="468.40" width="84.20" height="1.00" fill="#cfcfb4"/>
<rect x="182.00" y="483.95" width="147.50" height="1.15" fill="#2e2e2a"/>
<rect x="329.50" y="484.03" width="291.90" height="1.00" fill="#c4c4c0"/>
<rect x="621.40" y="484.03" width="84.20" height="1.00" fill="#cfcfb4"/>
<rect x="182.00" y="499.59" width="147.50" height="1.15" fill="#2e2e2a"/>
<rect x="329.50" y="499.66" width="291.90" height="1.00" fill="#c4c4c0"/>
<rect x="621.40" y="499.66" width="84.20" height="1.00" fill="#cfcfb4"/>
<rect x="182.00" y="515.21" width="147.50" height="1.15" fill="#2e2e2a"/>
<rect x="329.50" y="515.29" width="291.90" height="1.00" fill="#c4c4c0"/>
<rect x="621.40" y="515.29" width="84.20" height="1.00" fill="#cfcfb4"/>
<rect x="182.00" y="530.85" width="147.50" height="1.15" fill="#2e2e2a"/>
<rect x="329.50" y="530.92" width="291.90" height="1.00" fill="#c4c4c0"/>
<rect x="621.40" y="530.92" width="84.20" height="1.00" fill="#cfcfb4"/>
<rect x="182.00" y="546.47" width="147.50" height="1.15" fill="#2e2e2a"/>
<rect x="329.50" y="546.55" width="291.90" height="1.00" fill="#c4c4c0"/>
<rect x="621.40" y="546.55" width="84.20" height="1.00" fill="#cfcfb4"/>
<rect x="182.00" y="562.11" width="147.50" height="1.15" fill="#2e2e2a"/>
<rect x="329.50" y="562.18" width="291.90" height="1.00" fill="#c4c4c0"/>
<rect x="621.40" y="562.18" width="84.20" height="1.00" fill="#cfcfb4"/>
<rect x="182.00" y="577.73" width="147.50" height="1.15" fill="#2e2e2a"/>
<rect x="329.50" y="577.81" width="291.90" height="1.00" fill="#c4c4c0"/>
<rect x="621.40" y="577.81" width="84.20" height="1.00" fill="#cfcfb4"/>
<rect x="182.00" y="593.37" width="147.50" height="1.15" fill="#2e2e2a"/>
<rect x="329.50" y="593.44" width="291.90" height="1.00" fill="#c4c4c0"/>
<rect x="621.40" y="593.44" width="84.20" height="1.00" fill="#cfcfb4"/>
<rect x="182.00" y="630.92" width="147.50" height="1.15" fill="#2e2e2a"/>
<rect x="328.93" y="152.40" width="1.15" height="479.10" fill="#3a3a36"/>
<rect x="620.75" y="152.40" width="1.30" height="15.05" fill="#3a3a36"/>
<rect x="620.90" y="167.45" width="1.00" height="464.05" fill="#b5b5a0"/>
<rect x="705.02" y="152.40" width="1.15" height="479.70" fill="#33332f"/>
<rect x="182.00" y="630.80" width="523.60" height="1.40" fill="#2a2a28"/>
</svg>
<div id="tx">
<span class="t" style="left:21.75px;top:8px;font-size:13px;transform:scaleX(1.0017);font-weight:bold;color:#f4f8ff;text-shadow:0.6px 0.8px 0 #0a2a80;">Kraftfahrtversicherung</span>
<span class="t" style="left:6.85px;top:30px;font-size:10.8px;transform:scaleX(0.9559);color:#111;">Auswahl</span>
<span class="t" style="left:57.55px;top:30px;font-size:10.8px;transform:scaleX(0.9415);color:#111;">Ansicht</span>
<span class="t" style="left:102.67px;top:30px;font-size:10.8px;transform:scaleX(0.9607);color:#111;">Einstellungen</span>
<span class="t" style="left:175.62px;top:30px;font-size:10.8px;transform:scaleX(1.0144);color:#111;">Extras</span>
<span class="t" style="left:218.49px;top:30px;font-size:10.8px;transform:scaleX(0.9485);color:#111;">Zoom</span>
<span class="t" style="left:255.05px;top:30px;font-size:10.8px;transform:scaleX(0.9794);color:#111;">INFO</span>
<span class="t" style="left:317.41px;top:72px;font-size:7px;transform:scaleX(0.6897);font-weight:bold;color:#7a7a7a;">Card</span>
<div id="lp"><span class="t" style="left:21.60px;top:3px;transform:scaleX(0.9105);color:#151515;">Kraftfahrtversicherung</span><span class="t" style="left:21.60px;top:18px;transform:scaleX(0.9135);color:#151515;">Unfallversicherung</span><span class="t" style="left:21.60px;top:34px;transform:scaleX(0.9218);color:#151515;">Rechtsschutzversicherung</span><span class="t" style="left:21.60px;top:49px;transform:scaleX(0.9190);color:#151515;">Haftpflichtversicherung</span><span class="t" style="left:21.60px;top:65px;transform:scaleX(0.9113);color:#151515;">Hausratversicherung</span><span class="t" style="left:21.60px;top:81px;transform:scaleX(0.9096);color:#151515;">Glasversicherung</span><span class="t" style="left:21.60px;top:96px;transform:scaleX(0.9153);color:#151515;">Lebensversicherung</span><span class="t" style="left:21.60px;top:112px;transform:scaleX(0.9137);color:#151515;">Zusatz-Rentenversicherung</span><span class="t" style="left:21.60px;top:127px;transform:scaleX(0.9136);color:#151515;">Krankenversicherung</span><span class="t" style="left:21.60px;top:143px;transform:scaleX(0.9119);color:#151515;">Krankenhaustagegeldversicherung</span><span class="t" style="left:21.60px;top:159px;transform:scaleX(0.9172);color:#151515;">Gebäudeversicherung</span><span class="t" style="left:21.60px;top:174px;transform:scaleX(0.9068);color:#151515;">Bausparvertrag</span><span class="t" style="left:21.60px;top:190px;transform:scaleX(0.8846);color:#151515;">Kredit</span><span class="t" style="left:21.60px;top:205px;transform:scaleX(0.9025);color:#151515;">Sonstiges</span></div>
<span class="t" style="left:184.25px;top:92px;transform:scaleX(0.9186);">Versicherung</span>
<span class="t" style="left:183.39px;top:107px;transform:scaleX(0.9938);">LVM</span>
<span class="t" style="left:252.33px;top:92px;transform:scaleX(0.9149);">Sachbearbeiter</span>
<span class="t" style="left:251.96px;top:107px;transform:scaleX(0.9146);">Mustermann</span>
<span class="t" style="left:330.84px;top:92px;transform:scaleX(0.8906);">Strasse</span>
<span class="t" style="left:330.47px;top:107px;transform:scaleX(0.9004);">Kolde-Ring21</span>
<span class="t" style="left:401.13px;top:92px;transform:scaleX(0.9477);">PLZ</span>
<span class="t" style="left:401.74px;top:107px;transform:scaleX(0.9081);">48126</span>
<span class="t" style="left:438.14px;top:92px;transform:scaleX(0.8793);">Ort</span>
<span class="t" style="left:437.76px;top:107px;transform:scaleX(0.9104);">Münster</span>
<span class="t" style="left:483.62px;top:92px;transform:scaleX(0.9736);">Telefon</span>
<span class="t" style="left:483.27px;top:107px;transform:scaleX(0.9112);">(0800) 586 37 33</span>
<span class="t" style="left:569.65px;top:92px;transform:scaleX(0.9275);">Fax</span>
<span class="t" style="left:569.86px;top:107px;transform:scaleX(0.9205);">(0251) 702 10 99</span>
<span class="t" style="left:659.35px;top:92px;transform:scaleX(0.9268);">Email</span>
<span class="t" style="left:659.52px;top:107px;transform:scaleX(0.9126);">info@lvm.de</span>
<span class="t" style="left:184.20px;top:155px;transform:scaleX(0.8877);">Versicherungsart:</span>
<span class="t" style="left:332.50px;top:155px;transform:scaleX(0.9078);">Kraftfahrtversicherung</span>
<span class="t" style="left:624.65px;top:155px;transform:scaleX(0.9253);">Bemerkungen</span>
<span class="t" style="left:184.20px;top:171px;transform:scaleX(0.8798);">Versicherungsnummer:</span>
<span class="t" style="left:332.50px;top:171px;transform:scaleX(0.9409);">123456</span>
<span class="t" style="left:184.20px;top:186px;transform:scaleX(0.8992);">Versicherungsablauf:</span>
<span class="t" style="left:332.50px;top:186px;transform:scaleX(0.9362);">01.01.2009</span>
<span class="t" style="left:184.20px;top:202px;transform:scaleX(0.8757);">Nummernschild:</span>
<span class="t" style="left:332.50px;top:202px;transform:scaleX(0.9009);">XXX-SR-100</span>
<span class="t" style="left:184.20px;top:218px;transform:scaleX(0.8844);">Fahrzeugart:</span>
<span class="t" style="left:332.50px;top:218px;transform:scaleX(0.9403);">PKW</span>
<span class="t" style="left:184.20px;top:233px;transform:scaleX(0.8855);">Fahrzeugtyp:</span>
<span class="t" style="left:332.50px;top:233px;transform:scaleX(0.9228);">VOLVO S60</span>
<span class="t" style="left:184.20px;top:249px;transform:scaleX(0.8782);">Herstellerschlüssel:</span>
<span class="t" style="left:332.50px;top:249px;transform:scaleX(0.9074);">XXXX</span>
<span class="t" style="left:184.20px;top:265px;transform:scaleX(0.9049);">Typschlüssel:</span>
<span class="t" style="left:332.50px;top:265px;transform:scaleX(0.8827);">XXX</span>
<span class="t" style="left:184.20px;top:280px;transform:scaleX(0.8635);">Erstzulassung:</span>
<span class="t" style="left:332.50px;top:280px;transform:scaleX(0.9352);">01.08.2005</span>
<span class="t" style="left:184.20px;top:296px;transform:scaleX(0.8800);">Fahrzeugidentifizierungs-Nr:</span>
<span class="t" style="left:332.50px;top:296px;transform:scaleX(0.9162);">WSXXXXXX</span>
<span class="t" style="left:184.20px;top:312px;transform:scaleX(0.8714);">Fahrzeugstärke:</span>
<span class="t" style="left:332.50px;top:312px;transform:scaleX(0.9374);">103 KW / 140 PS</span>
<span class="t" style="left:184.20px;top:327px;transform:scaleX(0.8845);">Risiko:</span>
<span class="t" style="left:332.50px;top:327px;transform:scaleX(0.9451);">Haftpflicht / Vollkasko inkl. Teilkasko</span>
<span class="t" style="left:184.20px;top:361px;transform:scaleX(0.9171);">Deckungsumfang:</span>
<span class="t" style="left:332.50px;top:348px;transform:scaleX(0.9108);">[Erweitert]</span>
<span class="t" style="left:332.50px;top:361px;transform:scaleX(0.9067);">100 Mio € Pauschal Person 8 Mio € je geschädigter Person</span>
<span class="t" style="left:332.50px;top:373px;transform:scaleX(0.9254);">300/150 Selbstbeteiligung</span>
<span class="t" style="left:184.20px;top:394px;transform:scaleX(0.8696);">KM-Klasse:</span>
<span class="t" style="left:332.50px;top:394px;transform:scaleX(1.0637);">5</span>
<span class="t" style="left:184.20px;top:410px;transform:scaleX(0.9044);">S/SF-Klasse:</span>
<span class="t" style="left:332.50px;top:410px;transform:scaleX(0.9926);">12</span>
<span class="t" style="left:184.20px;top:425px;transform:scaleX(0.8741);">Beitragssatz:</span>
<span class="t" style="left:332.50px;top:425px;transform:scaleX(0.8754);">30 %</span>
<span class="t" style="left:184.20px;top:441px;transform:scaleX(0.9165);">Tarifgruppe:</span>
<span class="t" style="left:332.50px;top:441px;transform:scaleX(0.9209);">Regional 0</span>
<span class="t" style="left:184.20px;top:457px;transform:scaleX(0.9240);">Typklasse:</span>
<span class="t" style="left:332.50px;top:457px;transform:scaleX(0.9880);">19</span>
<span class="t" style="left:184.20px;top:472px;transform:scaleX(0.9022);">Zahlungsart:</span>
<span class="t" style="left:332.50px;top:472px;transform:scaleX(0.9304);">Monatlich</span>
<span class="t" style="left:184.20px;top:488px;transform:scaleX(0.8862);">Beitrag in Euro:</span>
<span class="t" style="left:332.50px;top:488px;transform:scaleX(0.9833);">30</span>
<span class="t" style="left:625.16px;top:488px;transform:scaleX(0.9133);">Euro</span>
<span class="t" style="left:184.20px;top:503px;transform:scaleX(0.8921);">Kaufdatum:</span>
<span class="t" style="left:332.50px;top:503px;transform:scaleX(0.9327);">01.01.2006</span>
<span class="t" style="left:184.20px;top:519px;transform:scaleX(0.8880);">KM-Stand beim Kauf:</span>
<span class="t" style="left:332.50px;top:519px;transform:scaleX(0.9472);">5000</span>
<span class="t" style="left:625.13px;top:519px;transform:scaleX(0.9510);">KM</span>
<span class="t" style="left:184.20px;top:535px;transform:scaleX(0.9171);">Nächste HU Untersuchung:</span>
<span class="t" style="left:332.50px;top:535px;transform:scaleX(0.9336);">01.08.2007</span>
<span class="t" style="left:625.42px;top:535px;transform:scaleX(0.9603);">TÜV/ ASU</span>
<span class="t" style="left:184.20px;top:550px;transform:scaleX(0.8762);">Steuern im Jahr:</span>
<span class="t" style="left:332.50px;top:550px;transform:scaleX(0.9418);">160</span>
<span class="t" style="left:625.16px;top:550px;transform:scaleX(0.9133);">Euro</span>
<span class="t" style="left:184.20px;top:566px;transform:scaleX(0.8834);">Kaufpreis in Euro:</span>
<span class="t" style="left:332.50px;top:566px;transform:scaleX(0.9394);">10000</span>
<span class="t" style="left:625.16px;top:566px;transform:scaleX(0.9133);">Euro</span>
<span class="t" style="left:184.20px;top:582px;transform:scaleX(0.9129);">Unfallschaden:</span>
<span class="t" style="left:332.50px;top:582px;transform:scaleX(0.9280);">NEIN</span>
<span class="t" style="left:184.20px;top:608px;transform:scaleX(0.8854);">Notiz:</span>
<span class="t" style="left:332.50px;top:602px;transform:scaleX(0.9108);">[Erweitert]</span>
</div>
</body></html>
